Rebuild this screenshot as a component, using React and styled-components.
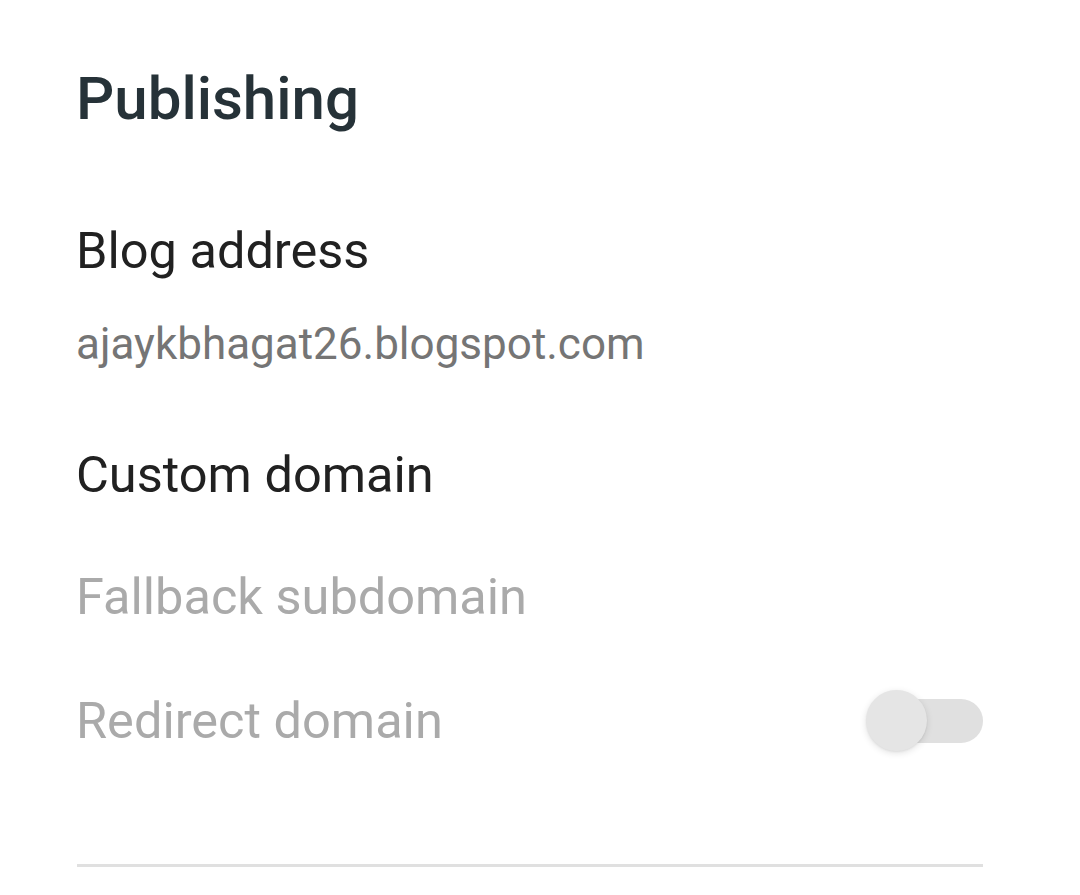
import React from "react";
import styled, { createGlobalStyle } from "styled-components";

const Global = createGlobalStyle`
  html, body { margin: 0; padding: 0; background: #ffffff; }
  body { font-family: Roboto, "Noto Sans", "Liberation Sans", sans-serif; }
`;

const Page = styled.div`
  width: 1080px;
  min-height: 895px;
  box-sizing: border-box;
  padding: 64px 97px 0 76px;
  display: flex;
  flex-direction: column;
`;

const Heading = styled.h1`
  margin: 0;
  font-size: 60px;
  line-height: 70px;
  font-weight: 500;
  color: #263238;
`;

const Title = styled.div`
  font-size: 50.5px;
  line-height: 58px;
  color: ${(p) => (p.$disabled ? "#aaaaaa" : "#212121")};
  margin-top: ${(p) => p.$gap}px;
`;

const Subtitle = styled.div`
  font-size: 44px;
  line-height: 52px;
  color: #757575;
  margin-top: ${(p) => p.$gap}px;
`;

const Row = styled.div`
  display: flex;
  align-items: center;
  justify-content: space-between;
  margin-top: ${(p) => p.$gap}px;
`;

const RowLabel = styled.div`
  font-size: 50.5px;
  line-height: 58px;
  color: #aaaaaa;
`;

const Track = styled.div`
  position: relative;
  width: 113px;
  height: 44px;
  border-radius: 22px;
  background: #e0e0e0;
`;

const Thumb = styled.div`
  position: absolute;
  left: -4px;
  top: -9px;
  width: 61px;
  height: 61px;
  border-radius: 50%;
  background: #e5e5e5;
  box-shadow: 0 2px 7px rgba(0, 0, 0, 0.12), 0 1px 2px rgba(0, 0, 0, 0.06);
`;

const Divider = styled.hr`
  margin: 114px 0 0 1px;
  border: none;
  height: 3px;
  background: #e0e0e0;
`;

export default function App() {
  return (
    <>
      <Global />
      <Page>
        <Heading>Publishing</Heading>
        <Title $gap={88}>Blog address</Title>
        <Subtitle $gap={38}>ajaykbhagat26.blogspot.com</Subtitle>
        <Title $gap={76}>Custom domain</Title>
        <Title $gap={64} $disabled>Fallback subdomain</Title>
        <Row $gap={66}>
          <RowLabel>Redirect domain</RowLabel>
          <Track>
            <Thumb />
          </Track>
        </Row>
        <Divider />
      </Page>
    </>
  );
}
